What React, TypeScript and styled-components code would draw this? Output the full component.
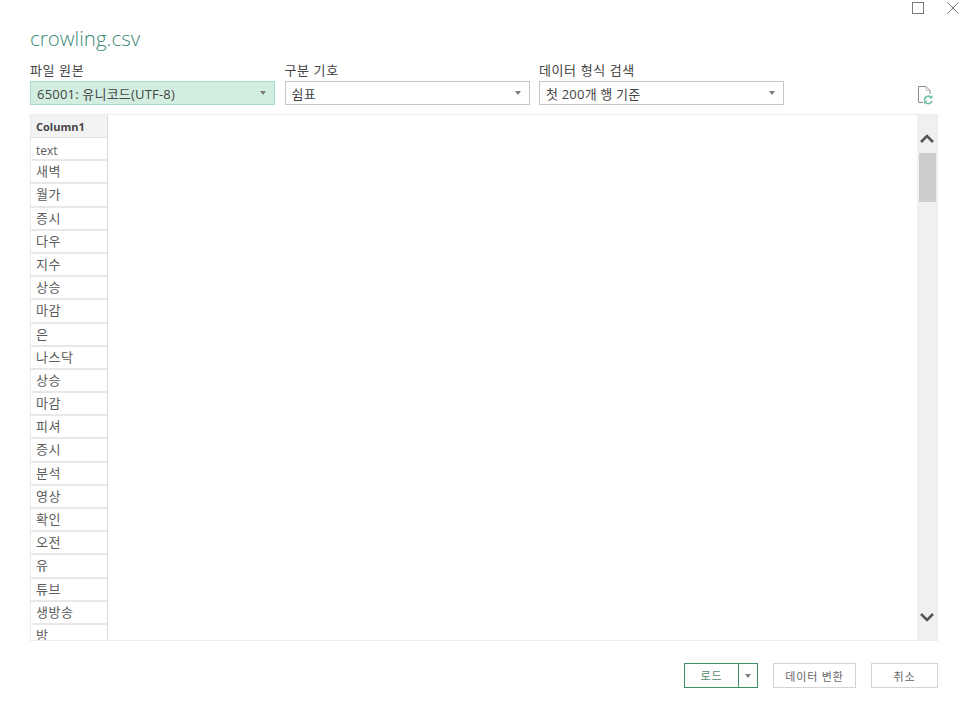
import * as React from 'react';
import styled, { createGlobalStyle } from 'styled-components';

const FONT = '"Open Sans", "Noto Sans CJK KR", sans-serif';

const ROWS = [
  'text', '새벽', '월가', '증시', '다우', '지수', '상승', '마감', '은', '나스닥', '상승',
  '마감', '피셔', '증시', '분석', '영상', '확인', '오전', '유', '튜브', '생방송', '방',
];

const GlobalStyle = createGlobalStyle`
  html, body {
    margin: 0;
    padding: 0;
    background: #fff;
  }
  body {
    font-family: ${FONT};
    overflow: hidden;
  }
`;

const Dialog = styled.div`
  width: 966px;
  height: 712px;
  box-sizing: border-box;
  padding: 0 28px 0 30px;
  display: flex;
  flex-direction: column;
`;

const WindowBar = styled.div`
  height: 14px;
  margin-right: -21px;
  padding-top: 2px;
  display: flex;
  justify-content: flex-end;
  gap: 23px;
  color: #7a7a7a;
`;

const Title = styled.h1`
  margin: 7px 0 0;
  height: 30px;
  font-size: 20.5px;
  line-height: 30px;
  font-weight: 300;
  color: #3c8c7c;
`;

const Controls = styled.div`
  margin-top: 9px;
  display: flex;
  gap: 9.5px;
`;

const Field = styled.div`
  width: 245px;
  display: flex;
  flex-direction: column;
`;

const FieldLabel = styled.label`
  height: 19px;
  font-size: 13px;
  line-height: 17px;
  color: #444;
  letter-spacing: 0.6px;
  white-space: nowrap;
`;

const Select = styled.div<{ $active?: boolean }>`
  height: 24px;
  box-sizing: border-box;
  padding: 0 8px 0 6px;
  display: flex;
  align-items: center;
  justify-content: space-between;
  font-size: 13px;
  letter-spacing: 0.2px;
  color: #444;
  background: ${(p) => (p.$active ? '#d2eee0' : '#fff')};
  border: 1px solid ${(p) => (p.$active ? '#a9dcc3' : '#c6c6c6')};
`;

const Caret = styled.span`
  width: 0;
  height: 0;
  border-left: 3.5px solid transparent;
  border-right: 3.5px solid transparent;
  border-top: 4px solid #7a7a7a;
`;

const RefreshButton = styled.div`
  margin-left: auto;
  margin-right: 4px;
  align-self: flex-end;
  height: 20px;
  display: flex;
`;

const Preview = styled.div`
  margin-top: 9px;
  height: 527px;
  box-sizing: border-box;
  border: 1px solid #ececec;
  display: flex;
  overflow: hidden;
`;

const Column = styled.div`
  width: 77px;
  flex: none;
  overflow: hidden;
  box-sizing: border-box;
  border-right: 1px solid #dedede;
`;

const HeaderCell = styled.div`
  height: 23px;
  box-sizing: border-box;
  padding-left: 5px;
  font-size: 11px;
  font-weight: 700;
  line-height: 24px;
  color: #444;
  background: #f3f3f3;
  border-bottom: 1px solid #e2e2e2;
`;

const Cell = styled.div<{ $latin?: boolean }>`
  height: 23.2px;
  box-sizing: border-box;
  padding-left: 5px;
  font-size: ${(p) => (p.$latin ? '12px' : '13px')};
  letter-spacing: ${(p) => (p.$latin ? '0' : '0.5px')};
  line-height: ${(p) => (p.$latin ? '25px' : '21px')};
  color: #5c5c5c;
  white-space: nowrap;
  border-bottom: 2px solid #e8e8e8;
`;

const Blank = styled.div`
  flex: 1;
`;

const Scrollbar = styled.div`
  width: 20px;
  flex: none;
  background: #f0f0f0;
  display: flex;
  flex-direction: column;
  align-items: center;
`;

const ScrollArrow = styled.svg<{ $top?: boolean }>`
  width: 14px;
  height: 9px;
  flex: none;
  margin-top: ${(p) => (p.$top ? '19px' : 'auto')};
  margin-bottom: ${(p) => (p.$top ? '0' : '18px')};
`;

const ScrollThumb = styled.div`
  width: 17px;
  height: 49px;
  margin-top: 10px;
  background: #cdcdcd;
`;

const Footer = styled.div`
  margin-top: 22px;
  display: flex;
  justify-content: flex-end;
  gap: 15px;
`;

const Button = styled.button<{ $width: number }>`
  width: ${(p) => p.$width}px;
  height: 25px;
  padding: 0;
  font-family: ${FONT};
  font-size: 11px;
  letter-spacing: 0.8px;
  color: #666;
  background: #fff;
  border: 1.5px solid #d4d4d4;
`;

const SplitButton = styled.div`
  width: 74px;
  height: 25px;
  box-sizing: border-box;
  display: flex;
  border: 1px solid #3f8f63;
`;

const SplitMain = styled.div`
  flex: 1;
  text-align: center;
  font-size: 11px;
  line-height: 23px;
  letter-spacing: 0.8px;
  color: #4f8a68;
  border-right: 1px solid #3f8f63;
`;

const SplitArrow = styled.div`
  width: 18px;
  display: flex;
  align-items: center;
  justify-content: center;
`;

function WindowIcons() {
  return (
    <WindowBar>
      <svg width="12" height="12" viewBox="0 0 12 12">
        <rect x="0.5" y="0.5" width="11" height="11" fill="none" stroke="currentColor" />
      </svg>
      <svg width="12" height="12" viewBox="0 0 12 12">
        <path d="M0.5 0.5 L11.5 11.5 M11.5 0.5 L0.5 11.5" fill="none" stroke="currentColor" />
      </svg>
    </WindowBar>
  );
}

function RefreshIcon() {
  return (
    <svg width="16" height="20" viewBox="0 0 16 20">
      <path d="M0.5 17.5 V1.5 H8 L12 5.5 V9" fill="none" stroke="#8a8a8a" />
      <path d="M0.5 17.5 H5" fill="none" stroke="#8a8a8a" />
      <path d="M8 1.5 V5.5 H12" fill="none" stroke="#c4c4c4" />
      <path d="M6.5 15 A4 4 0 0 1 13.5 12.5" fill="none" stroke="#6fc0a0" strokeWidth="1.6" />
      <path d="M14 16 A4 4 0 0 1 7.5 17.5" fill="none" stroke="#6fc0a0" strokeWidth="1.6" />
      <path d="M14.5 10 V13.5 H11 Z M6 19.5 V15.5 H9.5 Z" fill="#6fc0a0" />
    </svg>
  );
}

export default function App() {
  return (
    <Dialog>
      <GlobalStyle />
      <WindowIcons />
      <Title>crowling.csv</Title>
      <Controls>
        <Field>
          <FieldLabel>파일 원본</FieldLabel>
          <Select $active>
            65001: 유니코드(UTF-8)
            <Caret />
          </Select>
        </Field>
        <Field>
          <FieldLabel>구분 기호</FieldLabel>
          <Select>
            쉼표
            <Caret />
          </Select>
        </Field>
        <Field>
          <FieldLabel>데이터 형식 검색</FieldLabel>
          <Select>
            첫 200개 행 기준
            <Caret />
          </Select>
        </Field>
        <RefreshButton>
          <RefreshIcon />
        </RefreshButton>
      </Controls>
      <Preview>
        <Column>
          <HeaderCell>Column1</HeaderCell>
          {ROWS.map((row, i) => (
            <Cell key={i} $latin={row === 'text'}>
              {row}
            </Cell>
          ))}
        </Column>
        <Blank />
        <Scrollbar>
          <ScrollArrow $top viewBox="0 0 14 9">
            <path d="M1 8 L7 2 L13 8" fill="none" stroke="#555" strokeWidth="2.6" />
          </ScrollArrow>
          <ScrollThumb />
          <ScrollArrow viewBox="0 0 14 9">
            <path d="M1 1 L7 7 L13 1" fill="none" stroke="#555" strokeWidth="2.6" />
          </ScrollArrow>
        </Scrollbar>
      </Preview>
      <Footer>
        <SplitButton>
          <SplitMain>로드</SplitMain>
          <SplitArrow>
            <Caret />
          </SplitArrow>
        </SplitButton>
        <Button $width={83}>데이터 변환</Button>
        <Button $width={67}>취소</Button>
      </Footer>
    </Dialog>
  );
}
